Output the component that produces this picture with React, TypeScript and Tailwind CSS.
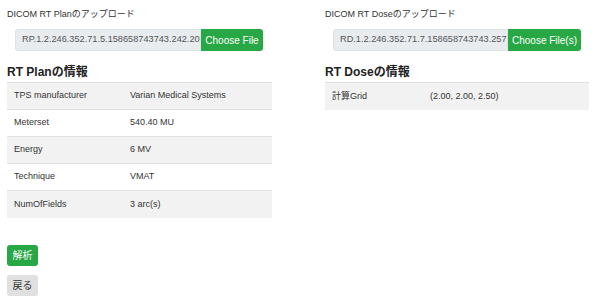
const planRows = [
  ['TPS manufacturer', 'Varian Medical Systems'],
  ['Meterset', '540.40 MU'],
  ['Energy', '6 MV'],
  ['Technique', 'VMAT'],
  ['NumOfFields', '3 arc(s)'],
];

const doseRows = [['計算Grid', '(2.00, 2.00, 2.50)']];

function Upload({ label, file, button, buttonWidth }: { label: string; file: string; button: string; buttonWidth: string }) {
  return (
    <div>
      <p className="h-[29px] pt-[8px] text-[9px] leading-[12px] text-[#333]">{label}</p>
      <div className="ml-[8px] flex h-[22px] w-[248px]">
        <div className="flex min-w-0 flex-1 items-center overflow-hidden whitespace-nowrap rounded-l-[3px] border border-[#dee2e6] bg-[#e9ecef] pl-[6px] text-[9.2px] text-[#555]">
          {file}
        </div>
        <button type="button" className={`${buttonWidth} shrink-0 whitespace-nowrap rounded-r-[3px] bg-[#28a745] text-[10px] text-white`}>
          {button}
        </button>
      </div>
    </div>
  );
}

function InfoTable({ title, rows, keyWidth }: { title: string; rows: string[][]; keyWidth: string }) {
  return (
    <div>
      <h2 className="mt-[12px] h-[19px] text-[12px] font-bold leading-[19px] text-[#222]">{title}</h2>
      <table className="w-full border-collapse text-[9px] text-[#333]">
        <tbody>
          {rows.map(([k, v], i) => (
            <tr key={k} className={`h-[27px] border-t border-[#dee2e6] ${i % 2 === 0 ? 'bg-[#f2f2f2]' : 'bg-white'}`}>
              <td className={`${keyWidth} pl-[7px]`}>{k}</td>
              <td>{v}</td>
            </tr>
          ))}
        </tbody>
      </table>
    </div>
  );
}

export default function App() {
  return (
    <div className="h-[303px] w-[600px] bg-white pl-[7px]" style={{ fontFamily: '"Liberation Sans", "Noto Sans CJK JP", sans-serif' }}>
      <div className="grid grid-cols-[265px_264px] gap-x-[53px]">
        <div>
          <Upload label="DICOM RT Planのアップロード" file="RP.1.2.246.352.71.5.158658743743.242.20" button="Choose File" buttonWidth="w-[62px]" />
          <InfoTable title="RT Planの情報" rows={planRows} keyWidth="w-[123px]" />
        </div>
        <div>
          <Upload label="DICOM RT Doseのアップロード" file="RD.1.2.246.352.71.7.158658743743.257" button="Choose File(s)" buttonWidth="w-[73px]" />
          <InfoTable title="RT Doseの情報" rows={doseRows} keyWidth="w-[105px]" />
        </div>
      </div>
      <div className="mt-[27px] flex flex-col items-start gap-[9px]">
        <button type="button" className="h-[21px] w-[31px] rounded-[3px] bg-[#28a745] text-[10px] text-white">解析</button>
        <button type="button" className="h-[21px] w-[31px] rounded-[3px] bg-[#e0e0e0] text-[10px] text-[#333]">戻る</button>
      </div>
    </div>
  );
}
